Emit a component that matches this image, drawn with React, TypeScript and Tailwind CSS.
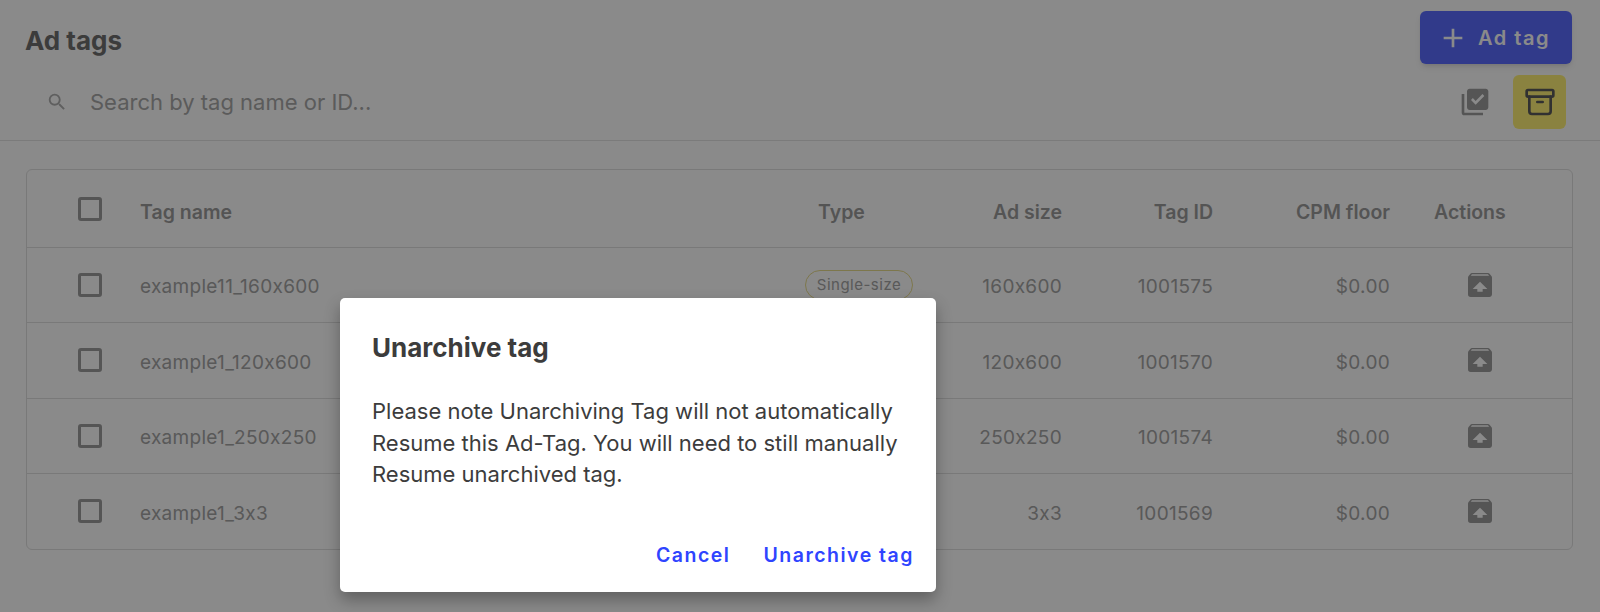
import { Archive } from 'lucide-react';
import { MdAdd, MdLibraryAddCheck, MdSearch, MdUnarchive } from 'react-icons/md';

const rows = [
  { name: 'example11_160x600', size: '160x600', id: '1001575' },
  { name: 'example1_120x600', size: '120x600', id: '1001570' },
  { name: 'example1_250x250', size: '250x250', id: '1001574' },
  { name: 'example1_3x3', size: '3x3', id: '1001569' },
];

const gridCols = 'grid grid-cols-[113px_665px_113px_144px_151px_177px_1fr] items-center';

function Checkbox() {
  return <div className="w-6 h-6 rounded-[3px] border-[3px] border-[#9e9e9e]" />;
}

export default function App() {
  return (
    <div className="relative h-[612px] overflow-hidden bg-white text-[#a4a4a4] font-['Inter','Noto_Sans',sans-serif] [font-feature-settings:'calt'_0]">
      <div className="h-[141px] border-b border-[#e4e4e4]">
        <div className="flex items-start justify-between pt-[11px] pl-[25px] pr-[28px]">
          <h1 className="mt-[10px] text-[26px] leading-[40px] font-bold text-[#707070]">Ad tags</h1>
          <button className="flex items-center w-[152px] h-[53px] pl-[18px] rounded-[6px] bg-[#5b6cff] shadow-md text-[20px] font-semibold tracking-[1.5px] text-white">
            <MdAdd className="w-8 h-8 -ml-[1px]" />
            <span className="ml-[9px]">Ad tag</span>
          </button>
        </div>
        <div className="flex items-center h-[54px] mt-[11px] pl-[46px] pr-[34px]">
          <MdSearch className="w-[22px] h-[22px] text-[#b0b0b0]" />
          <span className="ml-[22px] text-[22px] text-[#a8a8a8]">Search by tag name or ID...</span>
          <MdLibraryAddCheck className="ml-auto w-8 h-8 -mt-[1px] text-[#9e9e9e]" />
          <div className="flex items-center justify-center w-[53px] h-[54px] ml-[22px] rounded-[6px] bg-[#fff176]">
            <Archive className="w-8 h-8 text-[#5c5c5c]" />
          </div>
        </div>
      </div>

      <div className="mt-[28px] mx-[26px] w-[1547px] rounded-[6px] border border-[#e0e0e0]">
        <div className={`${gridCols} h-[78px] border-b border-[#e0e0e0] text-[19.5px] font-semibold text-[#9c9c9c]`}>
          <div className="pl-[51px]"><Checkbox /></div>
          <div className="pt-[8px]">Tag name</div>
          <div className="pt-[8px] pl-[13px]">Type</div>
          <div className="pt-[8px] text-right">Ad size</div>
          <div className="pt-[8px] text-right">Tag ID</div>
          <div className="pt-[8px] text-right">CPM floor</div>
          <div className="pt-[8px] pl-[44px]">Actions</div>
        </div>
        {rows.map((row, i) => (
          <div key={row.id} className={`${gridCols} h-[75.25px] text-[19px] tracking-[0.3px] ${i < rows.length - 1 ? 'border-b border-[#e0e0e0]' : ''}`}>
            <div className="pl-[51px]"><Checkbox /></div>
            <div className="pt-[5px]">{row.name}</div>
            <div>
              <span className="inline-flex items-center justify-center w-[108px] h-[30px] rounded-full border border-[#e8dc8c] text-[15px] tracking-[0.5px]">
                Single-size
              </span>
            </div>
            <div className="pt-[5px] text-right">{row.size}</div>
            <div className="pt-[5px] text-right">{row.id}</div>
            <div className="pt-[5px] text-right">$0.00</div>
            <div className="pl-[74px]"><MdUnarchive className="w-8 h-8 text-[#9e9e9e]" /></div>
          </div>
        ))}
      </div>

      <div className="absolute inset-0 bg-black/[0.46] pl-[340px] pt-[298px]">
        <div className="w-[596px] h-[294px] rounded-[5px] bg-white shadow-[0_8px_16px_rgba(0,0,0,0.3)] pt-[32px] pl-[32px] pr-[22px]">
          <h2 className="text-[26px] leading-[36px] font-bold text-[#3c3c3c]">Unarchive tag</h2>
          <p className="mt-[30px] text-[22px] leading-[31.5px] text-[#3c3c3c]">
            Please note Unarchiving Tag will not automatically
            <br />
            Resume this Ad-Tag. You will need to still manually
            <br />
            Resume unarchived tag.
          </p>
          <div className="flex justify-end gap-[33px] mt-[50px] text-[19.5px] font-semibold tracking-[1.5px] text-[#2f44ff]">
            <button>Cancel</button>
            <button>Unarchive tag</button>
          </div>
        </div>
      </div>
    </div>
  );
}
